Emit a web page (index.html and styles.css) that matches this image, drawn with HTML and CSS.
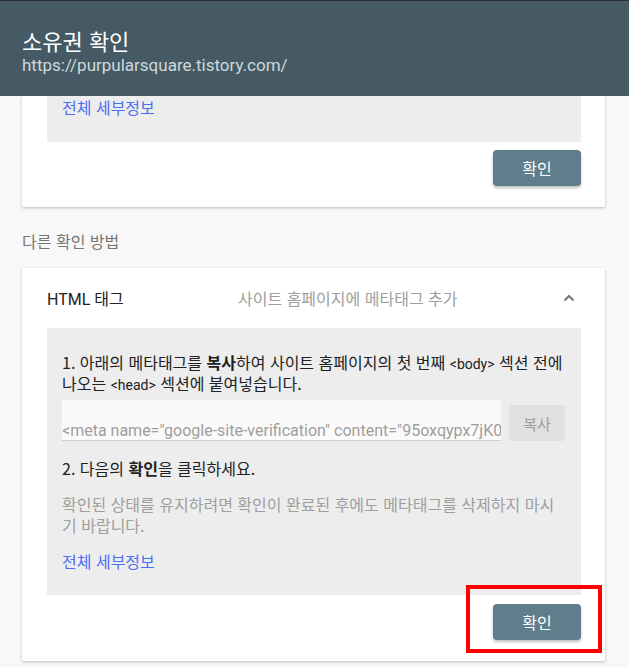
FILE: index.html
```html
<!DOCTYPE html>
<html lang="ko">
<head>
  <meta charset="UTF-8">
  <meta name="viewport" content="width=device-width, initial-scale=1.0">
  <title>소유권 확인</title>
  <link rel="stylesheet" href="styles.css">
</head>
<body>
  <header class="topbar">
    <h1 class="topbar-title">소유권 확인</h1>
    <div class="topbar-url">https://purpularsquare.tistory.com/</div>
  </header>

  <main class="content">
    <section class="card card-cut">
      <div class="panel panel-cut">
        <a class="link" href="#">전체 세부정보</a>
      </div>
      <div class="actions">
        <button class="btn-primary">확인</button>
      </div>
    </section>

    <h2 class="section-label">다른 확인 방법</h2>

    <section class="card">
      <div class="method-head">
        <span class="method-name">HTML 태그</span>
        <span class="method-desc">사이트 홈페이지에 메타태그 추가</span>
        <svg class="chevron" width="12" height="8" viewBox="0 0 12 8">
          <path d="M1.5 6.5 L6 2 L10.5 6.5" fill="none" stroke="#757575" stroke-width="2"/>
        </svg>
      </div>
      <div class="panel">
        <p class="step">1. 아래의 메타태그를 <b>복사</b>하여 사이트 홈페이지의 첫 번째 <span class="code">&lt;body&gt;</span> 섹션 전에 나오는 <span class="code">&lt;head&gt;</span> 섹션에 붙여넣습니다.</p>
        <div class="copy-row">
          <div class="meta-field">&lt;meta name="google-site-verification" content="95oxqypx7jK0dL3sQw_Xr2" /&gt;</div>
          <button class="btn-copy">복사</button>
        </div>
        <p class="step step-two">2. 다음의 <b>확인</b>을 클릭하세요.</p>
        <p class="note">확인된 상태를 유지하려면 확인이 완료된 후에도 메타태그를 삭제하지 마시기 바랍니다.</p>
        <a class="link link-bottom" href="#">전체 세부정보</a>
      </div>
      <div class="actions">
        <button class="btn-primary">확인</button>
      </div>
      <div class="highlight"></div>
    </section>
  </main>
</body>
</html>
```

FILE: styles.css
```css
body {
  margin: 0;
  background-color: #f8f8f8;
  font-family: Roboto, "Noto Sans CJK KR", sans-serif;
  color: #212121;
  height: 667px;
  overflow: hidden;
}

.topbar {
  height: 96px;
  border-top: 1px solid #2b3034;
  background: #455a64;
  padding: 0 22px;
  box-sizing: border-box;
  display: flex;
  flex-direction: column;
  justify-content: center;
  padding-top: 6px;
}

.topbar-title {
  margin: 0;
  font-family: "Noto Sans CJK KR", sans-serif;
  font-size: 22px;
  font-weight: 400;
  line-height: 27px;
  color: #ffffff;
}

.topbar-url {
  font-size: 17px;
  line-height: 22px;
  color: #cfd8dc;
}

.content {
  padding: 0 24px 0 22px;
}

.card {
  position: relative;
  background: #ffffff;
  padding: 0 24px 21px 25px;
  border-radius: 2px;
  box-shadow: 0 1px 3px rgba(0, 0, 0, 0.25);
}

.panel {
  background: #ededed;
  padding: 24px 16px 23px 15px;
}

.panel-cut {
  padding-top: 1px;
  padding-bottom: 24px;
}

.link {
  display: block;
  font-family: "Noto Sans CJK KR", sans-serif;
  font-size: 16px;
  line-height: 21px;
  color: #4c6ef5;
  text-decoration: none;
}

.link-bottom {
  margin-top: 15px;
}

.actions {
  display: flex;
  justify-content: flex-end;
  margin-top: 9px;
}

.card-cut .actions {
  margin-top: 8px;
}

.btn-primary {
  width: 88px;
  height: 36px;
  border: none;
  border-radius: 4px;
  background: #607d8b;
  color: #ffffff;
  font-family: "Noto Sans CJK KR", sans-serif;
  font-size: 16px;
  box-shadow: 0 2px 3px rgba(0, 0, 0, 0.25);
  cursor: pointer;
}

.section-label {
  margin: 24px 0 17px;
  font-family: "Noto Sans CJK KR", sans-serif;
  font-size: 16px;
  font-weight: 400;
  line-height: 20px;
  color: #757575;
}

.method-head {
  display: grid;
  grid-template-columns: 191px 1fr 12px;
  align-items: center;
  height: 60px;
  padding-right: 6px;
}

.method-name {
  font-size: 16px;
  color: #212121;
}

.method-desc {
  font-family: "Noto Sans CJK KR", sans-serif;
  font-size: 16px;
  color: #9e9e9e;
}

.chevron {
  display: block;
}

.step {
  margin: 0;
  font-family: "Noto Sans CJK KR", sans-serif;
  font-size: 16px;
  line-height: 21px;
  color: #212121;
}

.step b {
  font-weight: 700;
}

.code {
  font-family: Roboto, sans-serif;
  font-size: 14px;
  line-height: 1;
}

.step-two {
  margin-top: 17px;
}

.copy-row {
  display: flex;
  align-items: flex-end;
  gap: 8px;
  margin-top: 6px;
}

.meta-field {
  width: 439px;
  height: 41px;
  box-sizing: border-box;
  padding-top: 21px;
  background: #fafafa;
  border-bottom: 1px solid #cfcfcf;
  font-size: 16px;
  line-height: 19px;
  color: #9e9e9e;
  white-space: nowrap;
  overflow: hidden;
}

.btn-copy {
  width: 56px;
  height: 36px;
  border: none;
  border-radius: 3px;
  background: #e0e0e0;
  color: #9e9e9e;
  font-family: "Noto Sans CJK KR", sans-serif;
  font-size: 15px;
}

.note {
  margin: 15px 0 0;
  font-family: "Noto Sans CJK KR", sans-serif;
  font-size: 16px;
  line-height: 21px;
  color: #9e9e9e;
}

.highlight {
  position: absolute;
  left: 444px;
  top: 317px;
  width: 136px;
  height: 68px;
  box-sizing: border-box;
  border: 4px solid #ff0000;
}
```
